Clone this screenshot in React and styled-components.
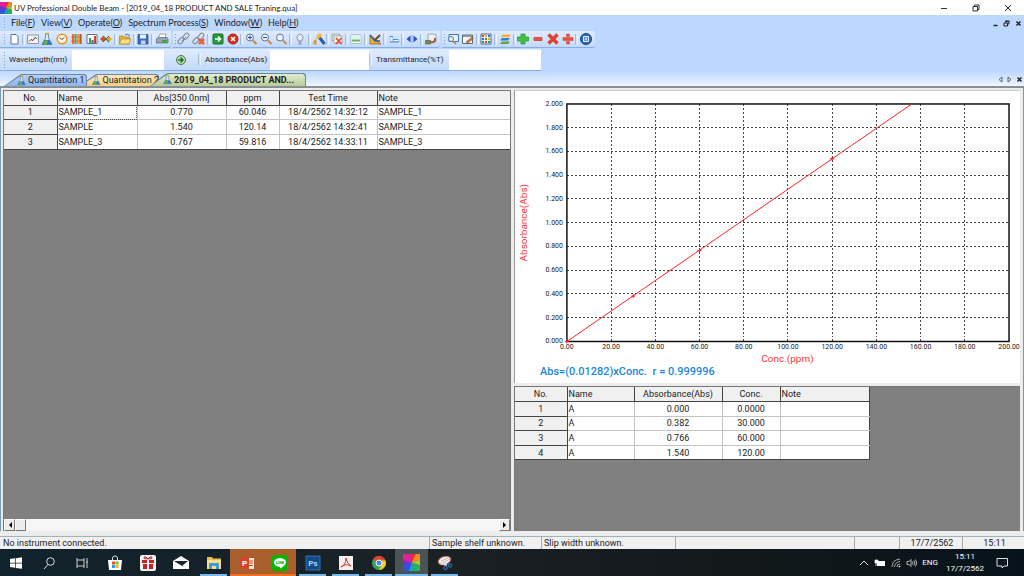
import React, { useState } from "react";
import styled, { createGlobalStyle } from "styled-components";

const GlobalStyle = createGlobalStyle`
  * {
    box-sizing: border-box;
  }

  body {
    margin: 0;
    font-family: Roboto, "Liberation Sans", sans-serif;
    font-size: 9px;
    line-height: 12px;
    color: #222;
    background: #bdd8ff;
  }

  button,
  input {
    margin: 0;
    padding: 0;
    border: 0;
    background: none;
    font: inherit;
    color: inherit;
  }

  svg {
    display: block;
  }
`;

const Window = styled.div`
  display: flex;
  flex-direction: column;
  height: 100vh;
  overflow: hidden;
  background: #bdd8ff;
`;

const TitleBar = styled.header`
  display: flex;
  align-items: center;
  height: 15px;
  flex: none;
  background: #fff;
`;

const Title = styled.h1`
  flex: 1;
  margin: 0 0 0 2px;
  font-family: Lato, Roboto, sans-serif;
  font-size: 8px;
  font-weight: 400;
  line-height: 14px;
  white-space: nowrap;
`;

const CaptionButton = styled.button`
  display: flex;
  align-items: center;
  justify-content: center;
  width: ${({ $width }) => $width || 32}px;
  height: 14px;
`;

const MenuBar = styled.nav`
  display: flex;
  align-items: center;
  height: 16px;
  flex: none;
  padding-left: 4px;
  font-family: Lato, Roboto, sans-serif;
`;

const Handle = styled.span`
  width: 1px;
  height: ${({ $height }) => $height || 10}px;
  flex: none;
  background: repeating-linear-gradient(#7fa3d8 0 1px, transparent 1px 3px);
`;

const MenuItem = styled.button`
  margin-left: 6px;
  white-space: nowrap;
`;

const MenuSpacer = styled.span`
  flex: 1;
`;

const ToolBars = styled.div`
  display: flex;
  gap: 2px;
  height: 18px;
  flex: none;
`;

const ToolBarShell = styled.div`
  display: flex;
  align-items: center;
  height: 17px;
  padding-left: ${({ $lead }) => $lead}px;
  padding-right: 2px;
  border-bottom: 1px solid #86aee4;
  border-radius: 0 2px 2px 0;
  background: linear-gradient(#dfebfd, #c3d9f9);
`;

const ToolGroup = styled.div`
  display: flex;
  align-items: center;
  justify-content: space-between;
  width: ${({ $width }) => $width}px;
  margin-left: ${({ $gap }) => $gap}px;
`;

const ToolButton = styled.button`
  width: 14px;
  height: 14px;
  flex: none;
`;

const Separator = styled.span`
  width: 3px;
  height: 11px;
  flex: none;
  border-left: 1px solid #9dbde9;
  border-right: 1px solid #eef5ff;
`;

const ReadoutBar = styled.div`
  display: flex;
  align-items: center;
  align-self: flex-start;
  height: 22px;
  flex: none;
  padding-left: 4px;
  border-bottom: 1px solid #86aee4;
  background: linear-gradient(#dfebfd, #c3d9f9);
`;

const ReadoutLabel = styled.label`
  width: ${({ $width }) => $width}px;
  padding-left: 4px;
  font-size: 8px;
  white-space: nowrap;
`;

const ReadoutInput = styled.input`
  width: ${({ $width }) => $width}px;
  height: 20px;
  background: #fff;
`;

const GoButton = styled.button`
  display: flex;
  justify-content: center;
  width: 34px;
`;

const TabStrip = styled.div`
  display: flex;
  align-items: flex-end;
  height: 16px;
  flex: none;
  padding-left: 4px;
  border-bottom: 1px solid #7e98a0;
  background: linear-gradient(#bdd8ff, #eef5ff);
`;

const tabShape = "polygon(0 100%, 14px 2px, 17px 0, calc(100% - 2px) 0, 100% 2px, 100% 100%)";

const Tab = styled.button`
  position: relative;
  z-index: ${({ $layer }) => $layer};
  display: flex;
  align-items: center;
  gap: 1px;
  width: ${({ $width }) => $width}px;
  height: ${({ $active }) => ($active ? 13 : 12)}px;
  flex: none;
  margin-left: ${({ $overlap }) => -$overlap}px;
  padding-left: 12px;
  font-weight: ${({ $active }) => ($active ? 700 : 400)};
  white-space: nowrap;
  overflow: hidden;
  background: #6b85a5;
  clip-path: ${tabShape};

  &::before {
    content: "";
    position: absolute;
    inset: 1px 1px 0;
    background: ${({ $fill }) => $fill};
    clip-path: ${tabShape};
  }

  > * {
    position: relative;
  }
`;

const Client = styled.main`
  display: flex;
  flex: 1;
  min-height: 0;
  padding: 2px 3px 0 2px;
  border-top: 1px solid #8e8a8a;
  border-left: 1px solid #7c9ab0;
  border-right: 1px solid #6d9db5;
  background: #ececec;
`;

const SamplePane = styled.section`
  display: flex;
  flex-direction: column;
  flex: 1 1 0;
  min-width: 0;
  border: 1px solid #777;
  border-bottom: 0;
  background: #808080;
`;

const Splitter = styled.div`
  width: 3px;
  flex: none;
  background: #ececec;
`;

const ResultPane = styled.section`
  display: flex;
  flex-direction: column;
  flex: 1 1 0;
  min-width: 0;
`;

const ChartBox = styled.div`
  border-top: 1px solid #ccc;
  border-left: 1px solid #999;
  background: #fff;

  svg {
    width: 100%;
  }
`;

const StandardsBox = styled.div`
  flex: 1;
  min-height: 0;
  margin-top: 3px;
  border-top: 1px solid #777;
  border-left: 1px solid #777;
  background: #808080;
`;

const Grid = styled.table`
  width: ${({ $width }) => $width || "100%"};
  height: ${({ $height }) => $height}px;
  table-layout: fixed;
  border-collapse: collapse;
  background: #fff;

  th,
  td {
    height: 14px;
    padding: 0 1px;
    border-right: 1px solid #c4c4c4;
    border-bottom: 1px solid #c4c4c4;
    font-weight: 400;
    line-height: 12px;
    text-align: center;
    white-space: nowrap;
  }

  th {
    border-color: #444;
    background: #f0f0f0;
  }

  tr > :first-child {
    border-right-color: #444;
  }

  tbody tr:last-child > * {
    border-bottom-color: #444;
  }

  tr > :last-child {
    border-right-color: ${({ $width }) => ($width ? "#444" : "transparent")};
  }
`;

const Cell = styled.td`
  && {
    text-align: ${({ $left }) => ($left ? "left" : "center")};
  }
  outline: ${({ $focused }) => ($focused ? "1px dotted #555" : "none")};
  outline-offset: -1px;
`;

const HeadCell = styled.th`
  && {
    text-align: ${({ $left }) => ($left ? "left" : "center")};
  }
`;

const ScrollTrack = styled.div`
  display: flex;
  height: 12px;
  flex: none;
  margin-top: auto;
  background: #f6f6f6;
`;

const ScrollPiece = styled.button`
  display: flex;
  align-items: center;
  justify-content: center;
  width: 11px;
  height: 12px;
  margin-left: ${({ $end }) => ($end ? "auto" : 0)};
  border: 1px solid #fff;
  border-right-color: #777;
  border-bottom-color: #777;
  background: #ececec;
`;

const ClientFoot = styled.div`
  height: 6px;
  flex: none;
  border-top: 2px solid #ececec;
  border-bottom: 1px solid #9db4b8;
  background: #ececec;
`;

const StatusBar = styled.footer`
  display: flex;
  height: 12px;
  flex: none;
  background: #f0f0f0;
`;

const StatusPane = styled.span`
  flex: ${({ $width }) => ($width ? `0 0 ${$width}px` : "1")};
  padding-left: 2px;
  border-left: 1px solid ${({ $plain }) => ($plain ? "transparent" : "#a8a8a8")};
  text-align: ${({ $center }) => ($center ? "center" : "left")};
  white-space: nowrap;
`;

const TaskBar = styled.div`
  display: flex;
  align-items: stretch;
  height: 27px;
  flex: none;
  color: #fff;
  background: linear-gradient(90deg, #10222c, #1a2226 40%, #10181a 75%, #07131b);
`;

const TaskButton = styled.button`
  display: flex;
  align-items: center;
  justify-content: center;
  width: ${({ $first }) => ($first ? 32 : 33)}px;
  height: 27px;
  flex: none;
  background: ${({ $fill }) => $fill || "transparent"};
  background-image: ${({ $line }) => ($line ? `linear-gradient(${$line}, ${$line})` : "none")};
  background-position: center bottom;
  background-size: ${({ $fill }) => ($fill ? "100%" : "27px")} 2px;
  background-repeat: no-repeat;
`;

const Tray = styled.div`
  display: flex;
  align-items: center;
  gap: 4px;
  margin-left: auto;
  padding-right: 16px;
  font-size: 8px;
`;

const TrayButton = styled.button`
  width: 12px;
  height: 12px;
`;

const Clock = styled.time`
  width: 46px;
  margin-right: 4px;
  text-align: center;
`;

// toolbar drawings, all on a 14 x 14 grid
const icons = {
  page: <path d="M4 2.500h5l2 2v7.500H4z" fill="#fff" stroke="#5e7396" />,
  spectrum: (
    <>
      <path d="M1.500 3h11v8.500h-11z" fill="#f3f3f3" stroke="#8d99a8" />
      <path d="M3 9.500l2-2 2 1 2-3 2 1" fill="none" stroke="#444" />
    </>
  ),
  flask: (
    <>
      <path d="M5.500 2h3v4l3.500 6.500H2L5.500 6z" fill="#dceaf8" stroke="#456b9d" strokeWidth=".7" />
      <path d="M4.500 8h5l2.500 4.500H2z" fill="#2f74c8" />
      <path d="M5 8.500h3l-1 4H3z" fill="#65b72d" />
      <path d="M5 1.500h4" stroke="#daa92c" strokeWidth="1.500" />
    </>
  ),
  clock: (
    <>
      <circle cx="7" cy="7" r="4.800" fill="#fff7df" stroke="#e69422" strokeWidth="1.500" />
      <path d="M4.500 5.500L7 7.500l2.500-2" fill="none" stroke="#555" />
    </>
  ),
  bands: (
    <>
      <path d="M2 2h2v10H2z" fill="#f26a2e" />
      <path d="M4.500 2h2v10h-2z" fill="#62a33c" />
      <path d="M7 2h2v10H7z" fill="#f0a53a" />
      <path d="M9.500 2h2v10h-2z" fill="#9a6030" />
      <path d="M1 5h11M1 9h11" stroke="#e6553a" strokeWidth=".7" />
    </>
  ),
  bars: (
    <>
      <path d="M2 2.500h10v9H2z" fill="#fff" stroke="#6b7481" />
      <path d="M4 6h2v5H4z" fill="#3aa24b" />
      <path d="M6.500 8h2v3h-2z" fill="#3465b4" />
      <path d="M9 4h2v7H9z" fill="#d43c2e" />
    </>
  ),
  links: (
    <>
      <path d="M1 7l3-3 3 3-3 3z" fill="#e44b22" />
      <path d="M7 7l3-3 3 3-3 3z" fill="#f1a51f" />
      <path d="M4 4l6 6" stroke="#4b9e3d" strokeWidth="1.500" />
      <path d="M4 10l6-6" stroke="#314e9a" />
    </>
  ),
  open: (
    <>
      <path d="M1.500 4h4l1 1h5v7h-10z" fill="#e5b643" stroke="#b08525" strokeWidth=".7" />
      <path d="M3 7h10l-2 5H1.500z" fill="#fbdc7e" stroke="#b08525" strokeWidth=".7" />
      <path d="M7 3q3-2 5 1" fill="none" stroke="#3872b9" />
    </>
  ),
  save: (
    <>
      <path d="M2 2.500h10v9.500H2z" fill="#376fc3" stroke="#274b88" strokeWidth=".7" />
      <path d="M4 2.500h6v4H4z" fill="#e9f1ff" />
      <path d="M5 8.500h4.500V12H5z" fill="#c5d2e9" />
    </>
  ),
  print: (
    <>
      <path d="M5 2h6l-1 5H3z" fill="#fff" stroke="#7a8390" strokeWidth=".7" />
      <path d="M1.500 7l2-1.500H12l1 1.500v4h-11.500z" fill="#9aa6b2" stroke="#58636f" strokeWidth=".7" />
      <path d="M7 8h5v3H7z" fill="#43a44c" />
    </>
  ),
  chain: (
    <g fill="none" stroke="#7d858f">
      <rect x="1" y="6" width="7" height="4" rx="2" transform="rotate(-50 5 9)" />
      <rect x="6" y="2.500" width="7" height="4" rx="2" transform="rotate(-50 9 5)" />
      <path d="M5 9l4-4" />
    </g>
  ),
  unchain: (
    <>
      <g fill="none" stroke="#7d858f">
        <rect x="1" y="6" width="7" height="4" rx="2" transform="rotate(-50 5 9)" />
        <rect x="6" y="2.500" width="7" height="4" rx="2" transform="rotate(-50 9 5)" />
      </g>
      <path d="M7 7l5 5M12 7l-5 5" stroke="#e8603a" strokeWidth="2.500" />
    </>
  ),
  go: (
    <>
      <rect x="2" y="2" width="10" height="10" rx="1" fill="#259a3b" stroke="#13702a" />
      <path d="M4 7h5M7 4.500L9.500 7 7 9.500" fill="none" stroke="#fff" strokeWidth="1.500" />
    </>
  ),
  stop: (
    <>
      <circle cx="7" cy="7" r="5" fill="#dc2f20" stroke="#a51b12" />
      <path d="M5 5l4 4M9 5l-4 4" stroke="#fff" strokeWidth="1.500" />
    </>
  ),
  zoomIn: (
    <>
      <circle cx="6" cy="5.500" r="3.500" fill="#e9f3ff" stroke="#637590" />
      <path d="M9 8.500l3.500 3.500" stroke="#c58b3f" strokeWidth="2" />
      <path d="M4 5.500h4M6 3.500v4" stroke="#234f9c" />
    </>
  ),
  zoomOut: (
    <>
      <circle cx="6" cy="5.500" r="3.500" fill="#e9f3ff" stroke="#637590" />
      <path d="M9 8.500l3.500 3.500" stroke="#c58b3f" strokeWidth="2" />
      <path d="M4 5.500h4" stroke="#234f9c" />
    </>
  ),
  zoom: (
    <>
      <circle cx="6" cy="5.500" r="3.500" fill="#e9f3ff" stroke="#637590" />
      <path d="M9 8.500l3.500 3.500" stroke="#c58b3f" strokeWidth="2" />
    </>
  ),
  bulb: (
    <>
      <path d="M5.500 9Q3.500 6 4 4.500 5 2 7 2t3 2.500Q10.500 6 8.500 9z" fill="#e3ebf5" stroke="#8793a4" />
      <path d="M5.500 10h3M5.500 12h3" stroke="#7b8490" />
    </>
  ),
  wand: (
    <>
      <path d="M1.500 9l3-2v5.500h-3z" fill="#d99a28" />
      <path d="M7 5l5.500 7" stroke="#2f58a5" strokeWidth="3" />
      <path d="M4 7l1-4 3-2 2 2-2 3z" fill="#f4b62a" />
    </>
  ),
  discard: (
    <>
      <path d="M2 2h8v7H2z" fill="#d8dde4" stroke="#8e98a4" strokeWidth=".7" />
      <path d="M4 4h8v7H4z" fill="#f3f3f3" stroke="#8e98a4" strokeWidth=".7" />
      <path d="M6 6l5.500 6M11.500 6L6 12" stroke="#e34a25" strokeWidth="1.700" />
    </>
  ),
  baseline: (
    <>
      <path d="M2 2.500h10v9H2z" fill="#fff" stroke="#a5adb7" strokeWidth=".7" />
      <path d="M2.500 3h9v4h-9z" fill="#dff1f4" />
      <path d="M3 8.500h8" stroke="#5fb753" strokeWidth="2" />
    </>
  ),
  measure: (
    <>
      <path d="M2 3v9h11z" fill="#f1b138" stroke="#765626" strokeWidth=".7" />
      <path d="M2 3l5 6h5" fill="none" stroke="#315b9b" strokeWidth="1.500" />
      <path d="M7 8l5-5" stroke="#6b4a2b" strokeWidth="2" />
    </>
  ),
  step: (
    <>
      <path d="M3 4.500h3v5H3zM6 7.500h6v2H6z" fill="#e8f2ff" stroke="#8db6e6" strokeWidth=".7" />
      <path d="M3 4.500h3M6 7.500h5M3 10h9" stroke="#4b88ce" />
    </>
  ),
  split: (
    <>
      <path d="M1.500 7L5.500 3.500v7zM12.500 7L8.500 3.500v7z" fill="#2553d1" />
      <path d="M7 3v8" stroke="#8fb0ee" />
    </>
  ),
  report: (
    <>
      <path d="M4 2h8v8H4z" fill="#eceff3" stroke="#858d98" strokeWidth=".7" />
      <path d="M1.500 8.500h5v3.500h-5z" fill="#6f8f4e" stroke="#56603f" strokeWidth=".7" />
      <path d="M6.500 10q5 1 4.500-4" fill="none" stroke="#b0583a" strokeWidth="2" />
    </>
  ),
  inspect: (
    <>
      <path d="M3 2.500h9.500v7H3z" fill="#e8f4ff" stroke="#3f73b5" />
      <circle cx="5" cy="7" r="2.500" fill="#dff1fb" stroke="#697987" />
      <path d="M7 9l3 3" stroke="#b87e3a" strokeWidth="1.500" />
    </>
  ),
  edit: (
    <>
      <path d="M1.500 3h10v8.500h-10z" fill="#f5f5f5" stroke="#5b6878" />
      <path d="M2 3h9v2H2z" fill="#8b98a8" />
      <path d="M5 10l6-5 1.500 1.500L7 11z" fill="#cc8238" stroke="#634528" strokeWidth=".5" />
    </>
  ),
  palette: (
    <>
      <path d="M2 2h10v10H2z" fill="#f4f4f4" stroke="#48679c" />
      <path d="M3 3h2v2H3zM6 9h2v2H6z" fill="#dd3d30" />
      <path d="M6 3h2v2H6zM9 6h2v2H9z" fill="#e3a91b" />
      <path d="M9 3h2v2H9zM3 6h2v2H3z" fill="#2b6dc7" />
      <path d="M6 6h2v2H6zM3 9h2v2H3zM9 9h2v2H9z" fill="#31963e" />
    </>
  ),
  layers: (
    <>
      <path d="M2 12l2-2.500h8L10 12z" fill="#59a83e" />
      <path d="M2 8.500L4 6h8l-2 2.500z" fill="#3a7dc4" />
      <path d="M3 5l2-2.500h8L11 5z" fill="#f4ae2f" />
    </>
  ),
  plus: <path d="M5 2h4v3h3.500v4H9v3H5V9H1.500V5H5z" fill="#45c044" stroke="#249331" strokeWidth=".7" />,
  minus: <path d="M3 5.500h8v3H3z" fill="#f05242" stroke="#c5382b" strokeWidth=".7" />,
  cross: <path d="M2.500 2.500l9 9M11.500 2.500l-9 9" stroke="#df4133" strokeWidth="3.500" />,
  divide: <path d="M2 5.500h10v3H2zM5.500 2h3v2.500h-3zM5.500 9.500h3V12h-3z" fill="#f05242" stroke="#cd3b2c" strokeWidth=".5" />,
  target: (
    <>
      <circle cx="7" cy="7" r="5.500" fill="#2f66b9" stroke="#1b438d" />
      <path d="M4.500 4.500h5v5h-5z" fill="#5e9be4" stroke="#e4f0ff" />
      <path d="M6 7h2" stroke="#fff" />
    </>
  ),
  send: (
    <>
      <circle cx="7" cy="7" r="4.500" fill="#b9dfac" stroke="#4d704b" />
      <path d="M4 7h5M6.500 4.500L9 7 6.500 9.500" fill="none" stroke="#236f2b" strokeWidth="1.500" />
    </>
  ),
};

const Icon = ({ name, size = 14 }) => (
  <svg width={size} height={size} viewBox="0 0 14 14" aria-hidden="true">
    {icons[name]}
  </svg>
);

const Spectrum = ({ size }) => (
  <svg width={size} height={size} viewBox="0 0 12 12" aria-hidden="true">
    <path d="M0 0h12v12H0z" fill="#7d2bd0" />
    <path d="M0 0h5l1 6-6-2z" fill="#e0219b" />
    <path d="M5 0h4L6 6z" fill="#ef2b2b" />
    <path d="M9 0h3v4L6 6z" fill="#f58a1c" />
    <path d="M12 4v4L6 6z" fill="#a6cf20" />
    <path d="M12 8v4H8L6 6z" fill="#23b35a" />
    <path d="M8 12H4l2-6z" fill="#13a5cc" />
    <path d="M4 12H0V8l6-2z" fill="#2b55dd" />
  </svg>
);

const toolBars = [
  {
    lead: 4,
    gap: 2,
    width: 162,
    items: ["page", "|", "spectrum", "flask", "clock", "bands", "bars", "links", "|", "open", "|", "save", "|", "print"],
  },
  {
    lead: 2,
    gap: 1,
    width: 261,
    items: [
      "chain", "unchain", "|", "go", "stop", "|", "zoomIn", "zoomOut", "zoom", "|", "bulb", "|", "wand", "|",
      "discard", "|", "baseline", "|", "measure", "|", "step", "|", "split", "|", "report",
    ],
  },
  {
    lead: 2,
    gap: 1,
    width: 147,
    items: ["inspect", "edit", "|", "palette", "|", "layers", "|", "plus", "minus", "cross", "divide", "|", "target"],
  },
];

const menus = [
  ["File", "F"],
  ["View", "V"],
  ["Operate", "O"],
  ["Spectrum Process", "S"],
  ["Window", "W"],
  ["Help", "H"],
];

const tabs = [
  { label: "Quantitation 1", width: 83, overlap: 0, fill: "linear-gradient(#b5d1f8, #8fb3ea)" },
  { label: "Quantitation 2", width: 80, overlap: 8, fill: "linear-gradient(#fdeac0, #f7cf80)" },
  { label: "2019_04_18 PRODUCT AND...", width: 156, overlap: 9, fill: "linear-gradient(#e2eccf, #b9cb98)" },
];

const sampleColumns = [
  { label: "No.", width: 53 },
  { label: "Name", width: 80, left: true },
  { label: "Abs[350.0nm]", width: 89 },
  { label: "ppm", width: 53 },
  { label: "Test Time", width: 98 },
  { label: "Note", left: true },
];

const samples = [
  ["1", "SAMPLE_1", "0.770", "60.046", "18/4/2562 14:32:12", "SAMPLE_1"],
  ["2", "SAMPLE", "1.540", "120.14", "18/4/2562 14:32:41", "SAMPLE_2"],
  ["3", "SAMPLE_3", "0.767", "59.816", "18/4/2562 14:33:11", "SAMPLE_3"],
];

const standardColumns = [
  { label: "No.", width: 52 },
  { label: "Name", width: 67, left: true },
  { label: "Absorbance(Abs)", width: 88 },
  { label: "Conc.", width: 58 },
  { label: "Note", width: 89, left: true },
];

const standards = [
  ["1", "A", "0.000", "0.0000", ""],
  ["2", "A", "0.382", "30.000", ""],
  ["3", "A", "0.766", "60.000", ""],
  ["4", "A", "1.540", "120.00", ""],
];

const DataGrid = ({ columns, rows, height, width, focusedRow }) => (
  <Grid $height={height} $width={width}>
    <colgroup>
      {columns.map((column) => (
        <col key={column.label} width={column.width} />
      ))}
    </colgroup>
    <thead>
      <tr>
        {columns.map((column) => (
          <HeadCell key={column.label} scope="col" $left={column.left}>
            {column.label}
          </HeadCell>
        ))}
      </tr>
    </thead>
    <tbody>
      {rows.map((row, rowIndex) => (
        <tr key={row[0]}>
          {row.map((value, index) =>
            index === 0 ? (
              <HeadCell key={index} scope="row">
                {value}
              </HeadCell>
            ) : (
              <Cell key={index} $left={columns[index].left} $focused={index === 1 && rowIndex === focusedRow}>
                {value}
              </Cell>
            )
          )}
        </tr>
      ))}
    </tbody>
  </Grid>
);

const plot = { left: 52, right: 495, top: 13, bottom: 251, maxX: 200, maxY: 2 };
const toX = (value) => plot.left + (value / plot.maxX) * (plot.right - plot.left);
const toY = (value) => plot.bottom - (value / plot.maxY) * (plot.bottom - plot.top);
const slope = 0.01282;

const CalibrationChart = () => {
  const steps = Array.from({ length: 11 }, (_, index) => index);

  return (
    <svg viewBox="0 0 506 293" role="img" aria-label="Calibration curve">
      <g stroke="#444" strokeDasharray="2 2" shapeRendering="crispEdges">
        {steps.slice(1, 10).map((step) => (
          <g key={step}>
            <line x1={toX(step * 20)} x2={toX(step * 20)} y1={plot.top} y2={plot.bottom} />
            <line x1={plot.left} x2={plot.right} y1={toY(step * 0.2)} y2={toY(step * 0.2)} />
          </g>
        ))}
      </g>
      <rect
        x={plot.left}
        y={plot.top}
        width={plot.right - plot.left}
        height={plot.bottom - plot.top}
        fill="none"
        stroke="#111"
        strokeWidth="1.500"
      />
      <g fontSize="7" fill="#222">
        {steps.map((step) => (
          <g key={step}>
            <text x={plot.left - 4} y={toY(step * 0.2) + 2} textAnchor="end">
              {(step * 0.2).toFixed(3)}
            </text>
            <text x={toX(step * 20)} y={plot.bottom + 8} textAnchor="middle">
              {(step * 20).toFixed(2)}
            </text>
          </g>
        ))}
      </g>
      <g stroke="#f22" fill="none">
        <line x1={toX(0)} y1={toY(0)} x2={toX(2 / slope)} y2={toY(2)} />
        {standards.map(([no, , abs, conc]) => (
          <path key={no} d={`M${toX(conc) - 2} ${toY(abs)}h4m-2 -2v4`} />
        ))}
      </g>
      <g fontSize="10" fill="#f33">
        <text x="273" y="272" textAnchor="middle">
          Conc.(ppm)
        </text>
        <text transform="translate(12 132) rotate(-90)" textAnchor="middle">
          Absorbance(Abs)
        </text>
      </g>
      <text x="25" y="285" fontSize="11" fontWeight="500" fill="#1a86dc">
        Abs=(0.01282)xConc.{"\u00a0 "}r = 0.999996
      </text>
    </svg>
  );
};

const blue = "#76b9ed";

const tasks = [
  {
    label: "Start",
    art: <path d="M2 4l5-.7v4.400H2zM7.700 3.200L14 2.300v5.400H7.700zM2 8.400h5v4.400L2 12zM7.700 8.400H14v5.400l-6.300-.9z" fill="#fff" />,
  },
  {
    label: "Search",
    art: (
      <g fill="none" stroke="#ddd">
        <circle cx="9.500" cy="6.500" r="3.800" />
        <path d="M7 9.500L3 14" />
      </g>
    ),
  },
  {
    label: "Task view",
    art: (
      <g fill="none" stroke="#ccc">
        <path d="M3 5h7v6H3zM3 5V3M10 5V3M3 11v2M10 11v2M13 3v10M12 7h2" />
      </g>
    ),
  },
  {
    label: "Store",
    art: (
      <>
        <path d="M5.500 5V3q0-2 2.500-2t2.500 2v2" fill="none" stroke="#ddd" />
        <path d="M1 5h14l-1 10H2z" fill="#fff" />
        <path d="M5 6.500h3v3H5z" fill="#e6502c" />
        <path d="M8.500 6.500h3v3h-3z" fill="#78b72b" />
        <path d="M5 10h3v3H5z" fill="#2a9fe4" />
        <path d="M8.500 10h3v3h-3z" fill="#f2b41c" />
      </>
    ),
  },
  {
    label: "Gift",
    art: (
      <>
        <rect x="0" y="0" width="16" height="16" rx="2" fill="#f4f4f4" />
        <path d="M2 5h5v3H2zM9 5h5v3H9zM3 9h4v5H3zM9 9h4v5H9z" fill="#c62326" />
        <path d="M7.500 4Q3 4 4 2q2-1 4 2 2-3 4-2 1 2-3.500 2" fill="none" stroke="#c62326" />
      </>
    ),
  },
  {
    label: "Mail",
    art: (
      <>
        <path d="M0 6l8-5 8 5v8H0z" fill="#fff" />
        <path d="M1 6h14L9.500 10.500 11 12 5 8.500z" fill="#17252d" />
      </>
    ),
  },
  {
    label: "File Explorer",
    line: blue,
    art: (
      <>
        <path d="M1 2h5l1 1.500h8V13H1z" fill="#eebf4d" />
        <path d="M1 5h14v9H1z" fill="#fbdf87" />
        <path d="M3 14V8h10v6h-3v-3H6v3z" fill="#3f9be0" />
      </>
    ),
  },
  {
    label: "PowerPoint",
    fill: "#a85f2c",
    line: "#f27022",
    art: (
      <>
        <path d="M8 3h7v11H8z" fill="#f6e9e4" />
        <path d="M10 6h4M10 8h4M10 10.500h4" stroke="#d24726" />
        <path d="M1 3l9-2v14l-9-2z" fill="#d24726" />
        <text x="3" y="11" fontSize="8" fontWeight="700" fill="#fff">
          P
        </text>
      </>
    ),
  },
  {
    label: "LINE",
    fill: "#a85f2c",
    line: "#f27022",
    art: (
      <>
        <rect width="16" height="16" rx="3" fill="#00b900" />
        <path d="M8 3q6 .5 6 4.500Q13 11 8 13.500V12Q2 11 2 7.500 2 3.500 8 3z" fill="#fff" />
        <text x="8" y="9" fontSize="4" fontWeight="700" textAnchor="middle" fill="#00a000">
          LINE
        </text>
      </>
    ),
  },
  {
    label: "Photoshop",
    line: blue,
    art: (
      <>
        <path d="M1 1h14v14H1z" fill="#164a86" stroke="#2e71b8" />
        <text x="8" y="11" fontSize="8" fontWeight="700" textAnchor="middle" fill="#a9d8ff">
          Ps
        </text>
      </>
    ),
  },
  {
    label: "Acrobat",
    line: blue,
    art: (
      <>
        <path d="M1 1h14v14H1z" fill="#f5f1f0" />
        <path d="M3 12q5-2 5-9Q9 9 13 11 8 8 3 12z" fill="none" stroke="#d9362d" />
      </>
    ),
  },
  {
    label: "Chrome",
    line: blue,
    art: (
      <>
        <circle cx="8" cy="8" r="7" fill="#3aa757" />
        <path d="M8 8L2 4.400Q4 1 8 1t6.500 4.500H8z" fill="#e0442f" />
        <path d="M14.500 5.500Q16 10 12.500 13.300 10.500 15 8 15l3-6V5.500z" fill="#f6c92f" />
        <circle cx="8" cy="8" r="3" fill="#4287ec" stroke="#fff" />
      </>
    ),
  },
  { label: "UV Professional", fill: "#4b5356", line: blue },
  {
    label: "Snipping Tool",
    line: blue,
    art: (
      <>
        <ellipse cx="7.500" cy="5.500" rx="6.500" ry="4" transform="rotate(-18 7.500 5.500)" fill="#f6f3f3" stroke="#c45d55" />
        <path d="M4 6l7-3M5 8l8-4" stroke="#b4b4b4" />
        <path d="M3 8l7 2" stroke="#ddd" strokeWidth="2" />
        <circle cx="8.500" cy="13" r="1.700" fill="none" stroke="#3685cf" />
        <circle cx="13" cy="10.500" r="1.700" fill="none" stroke="#3685cf" />
      </>
    ),
  },
];

const App = () => {
  const [activeTab, setActiveTab] = useState(2);
  const [readouts, setReadouts] = useState({ wavelength: "", absorbance: "", transmittance: "" });

  const handleReadout = (event) => {
    setReadouts({ ...readouts, [event.target.id]: event.target.value });
  };

  return (
    <Window>
      <GlobalStyle />
      <TitleBar>
        <Spectrum size={12} />
        <Title>UV Professional Double Beam - [2019_04_18 PRODUCT AND SALE Traning.qua]</Title>
        <CaptionButton aria-label="Minimize">
          <svg width="8" height="8" viewBox="0 0 8 8">
            <path d="M1 4.500h6" stroke="#333" />
          </svg>
        </CaptionButton>
        <CaptionButton aria-label="Restore">
          <svg width="8" height="8" viewBox="0 0 8 8" fill="none" stroke="#333">
            <path d="M1 2.500h4.500V7H1zM2.500 2.500V1H7v4.500H5.500" />
          </svg>
        </CaptionButton>
        <CaptionButton aria-label="Close">
          <svg width="8" height="8" viewBox="0 0 8 8">
            <path d="M1 1l6 6M7 1L1 7" stroke="#333" />
          </svg>
        </CaptionButton>
      </TitleBar>

      <MenuBar>
        <Handle />
        {menus.map(([label, key]) => (
          <MenuItem key={key}>
            {label}(<u>{key}</u>)
          </MenuItem>
        ))}
        <MenuSpacer />
        <CaptionButton $width={11} aria-label="Minimize document">
          <svg width="7" height="7" viewBox="0 0 7 7">
            <path d="M1.500 5.500h4" stroke="#222" strokeWidth="1.500" />
          </svg>
        </CaptionButton>
        <CaptionButton $width={11} aria-label="Restore document">
          <svg width="7" height="7" viewBox="0 0 7 7" fill="none" stroke="#222">
            <path d="M1 3h3.500v3H1zM2.500 2.500v-1.500H6v3H5M2.500 1.500H6" />
          </svg>
        </CaptionButton>
        <CaptionButton $width={12} aria-label="Close document">
          <svg width="7" height="7" viewBox="0 0 7 7">
            <path d="M1.500 1.500l4 4M5.500 1.500l-4 4" stroke="#222" strokeWidth="1.500" />
          </svg>
        </CaptionButton>
      </MenuBar>

      <ToolBars>
        {toolBars.map((bar) => (
          <ToolBarShell key={bar.width} $lead={bar.lead} role="toolbar">
            <Handle />
            <ToolGroup $width={bar.width} $gap={bar.gap}>
              {bar.items.map((name, index) =>
                name === "|" ? (
                  <Separator key={index} />
                ) : (
                  <ToolButton key={index} aria-label={name}>
                    <Icon name={name} />
                  </ToolButton>
                )
              )}
            </ToolGroup>
          </ToolBarShell>
        ))}
      </ToolBars>

      <ReadoutBar>
        <Handle $height={16} />
        <ReadoutLabel htmlFor="wavelength" $width={67}>
          Wavelength(nm)
        </ReadoutLabel>
        <ReadoutInput id="wavelength" $width={92} value={readouts.wavelength} onChange={handleReadout} />
        <GoButton aria-label="Go to wavelength">
          <Icon name="send" />
        </GoButton>
        <Separator />
        <ReadoutLabel htmlFor="absorbance" $width={69}>
          Absorbance(Abs)
        </ReadoutLabel>
        <ReadoutInput id="absorbance" $width={99} value={readouts.absorbance} onChange={handleReadout} />
        <Separator />
        <ReadoutLabel htmlFor="transmittance" $width={77}>
          Transmittance(%T)
        </ReadoutLabel>
        <ReadoutInput id="transmittance" $width={92} value={readouts.transmittance} onChange={handleReadout} />
      </ReadoutBar>

      <TabStrip role="tablist">
        {tabs.map((tab, index) => (
          <Tab
            key={tab.label}
            role="tab"
            aria-selected={index === activeTab}
            $active={index === activeTab}
            $layer={index === activeTab ? tabs.length + 1 : tabs.length - index}
            $width={tab.width}
            $overlap={tab.overlap}
            $fill={tab.fill}
            onClick={() => setActiveTab(index)}
          >
            <Icon name="flask" size={11} />
            <span>{tab.label}</span>
          </Tab>
        ))}
        <MenuSpacer />
        <CaptionButton $width={9} aria-label="Scroll tabs left">
          <svg width="7" height="7" viewBox="0 0 7 7">
            <path d="M5 1v5L2 3.500z" fill="none" stroke="#444" strokeWidth=".8" />
          </svg>
        </CaptionButton>
        <CaptionButton $width={9} aria-label="Scroll tabs right">
          <svg width="7" height="7" viewBox="0 0 7 7">
            <path d="M2 1v5l3-2.500z" fill="none" stroke="#444" strokeWidth=".8" />
          </svg>
        </CaptionButton>
        <CaptionButton $width={10} aria-label="Close tab">
          <svg width="7" height="7" viewBox="0 0 7 7">
            <path d="M1.500 1.500l4 4M5.500 1.500l-4 4" stroke="#222" strokeWidth="1.500" />
          </svg>
        </CaptionButton>
      </TabStrip>

      <Client>
        <SamplePane>
          <DataGrid columns={sampleColumns} rows={samples} height={59} focusedRow={0} />
          <ScrollTrack>
            <ScrollPiece aria-label="Scroll left">
              <svg width="4" height="6" viewBox="0 0 4 6">
                <path d="M4 0v6L1 3z" />
              </svg>
            </ScrollPiece>
            <ScrollPiece aria-label="Scroll thumb" />
            <ScrollPiece $end aria-label="Scroll right">
              <svg width="4" height="6" viewBox="0 0 4 6">
                <path d="M0 0v6l3-3z" />
              </svg>
            </ScrollPiece>
          </ScrollTrack>
        </SamplePane>
        <Splitter />
        <ResultPane>
          <ChartBox>
            <CalibrationChart />
          </ChartBox>
          <StandardsBox>
            <DataGrid columns={standardColumns} rows={standards} height={73} width="354px" />
          </StandardsBox>
        </ResultPane>
      </Client>
      <ClientFoot />

      <StatusBar>
        <StatusPane $plain>No instrument connected.</StatusPane>
        <StatusPane $width={112}>Sample shelf unknown.</StatusPane>
        <StatusPane $width={134}>Slip width unknown.</StatusPane>
        <StatusPane $width={179} />
        <StatusPane $width={45} />
        <StatusPane $width={63} $center>
          17/7/2562
        </StatusPane>
        <StatusPane $width={62} $center>
          15:11
        </StatusPane>
      </StatusBar>

      <TaskBar>
        {tasks.map((task, index) => (
          <TaskButton key={task.label} aria-label={task.label} $first={index === 0} $fill={task.fill} $line={task.line}>
            {task.art ? (
              <svg width="16" height="16" viewBox="0 0 16 16">
                {task.art}
              </svg>
            ) : (
              <Spectrum size={17} />
            )}
          </TaskButton>
        ))}
        <Tray>
          <TrayButton aria-label="Show hidden icons">
            <svg viewBox="0 0 12 12" fill="none" stroke="#ddd">
              <path d="M2 8l4-4 4 4" />
            </svg>
          </TrayButton>
          <TrayButton aria-label="Battery">
            <svg viewBox="0 0 12 12">
              <path d="M3 4h8v5H3z" fill="#fff" />
              <path d="M1 3h3v3H1zM2 6v3" fill="#fff" stroke="#fff" strokeWidth=".7" />
            </svg>
          </TrayButton>
          <TrayButton aria-label="Network">
            <svg viewBox="0 0 12 12" fill="none" stroke="#bbb" strokeWidth=".9">
              <path d="M2 10Q2 3 10 2M4.500 10Q4.500 5.500 10 4.500M7 10q0-3 3-3" />
              <circle cx="9.500" cy="9.500" r=".6" fill="#fff" />
            </svg>
          </TrayButton>
          <TrayButton aria-label="Volume">
            <svg viewBox="0 0 12 12" fill="none" stroke="#ddd" strokeWidth=".8">
              <path d="M1 4.500h2L5 2.500v7l-2-2H1zM6.500 4.500q1 1.500 0 3M8 3.500q1.800 2.500 0 5M9.500 2.500q2.500 3.500 0 7" />
            </svg>
          </TrayButton>
          <span>ENG</span>
          <Clock>
            15:11
            <br />
            17/7/2562
          </Clock>
          <TrayButton aria-label="Notifications">
            <svg viewBox="0 0 12 12" fill="none" stroke="#ddd">
              <path d="M1 1.500h10.500v7.500H8L6 11V9H1z" />
            </svg>
          </TrayButton>
        </Tray>
      </TaskBar>
    </Window>
  );
};

export default App;
